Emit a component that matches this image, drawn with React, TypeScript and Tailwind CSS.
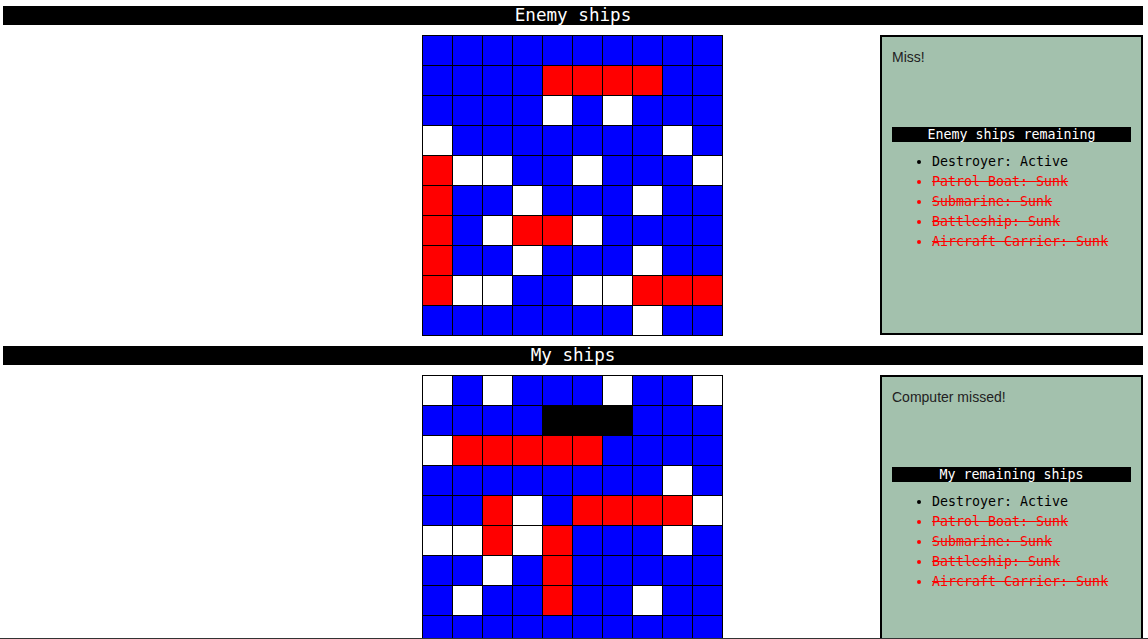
import React from "react";

const enemy = [
  "BBBBBBBBBB",
  "BBBBRRRRBB",
  "BBBBWBWBBB",
  "WBBBBBBBWB",
  "RWWBBWBBBW",
  "RBBWBBBWBB",
  "RBWRRWBBBB",
  "RBBWBBBWBB",
  "RWWBBWWRRR",
  "BBBBBBBWBB",
];

const mine = [
  "WBWBBBWBBW",
  "BBBBKKKBBB",
  "WRRRRRBBBB",
  "BBBBBBBBWB",
  "BBRWBRRRRW",
  "WWRWRBBBWB",
  "BBWBRBBBBB",
  "BWBBRBBWBB",
  "BBBBBBBBBB",
  "BBBBBBBBBB",
];

const cellClass: Record<string, string> = {
  B: "bg-[#0000ff]",
  R: "bg-[#ff0000]",
  W: "bg-white",
  K: "bg-black",
};

const ships = [
  { name: "Destroyer", sunk: false },
  { name: "Patrol Boat", sunk: true },
  { name: "Submarine", sunk: true },
  { name: "Battleship", sunk: true },
  { name: "Aircraft Carrier", sunk: true },
];

const mono = { fontFamily: '"DejaVu Sans Mono", monospace' };

function Board({ rows }: { rows: string[] }) {
  return (
    <div className="grid grid-cols-[repeat(10,29px)] grid-rows-[repeat(10,29px)] gap-px bg-black p-px w-[301px] h-[301px]">
      {rows.flatMap((r, i) =>
        r.split("").map((c, j) => <div key={i + "-" + j} className={cellClass[c]} />)
      )}
    </div>
  );
}

function Panel({ message, title }: { message: string; title: string }) {
  return (
    <div className="justify-self-end w-[263px] h-[300px] border-2 border-black bg-[#a3c1ad] px-[10px] pt-[12px]">
      <div
        className="h-[78px] text-[14px] leading-[16px] text-[#222]"
        style={{ fontFamily: '"Liberation Sans", Arial, sans-serif' }}
      >
        {message}
      </div>
      <div
        className="bg-black text-white text-center text-[13.3px] leading-[15px] h-[15px]"
        style={mono}
      >
        {title}
      </div>
      <ul className="mt-[10px] pl-[40px] list-disc text-[13.3px] leading-[20px]" style={mono}>
        {ships.map((s) => (
          <li
            key={s.name}
            className={s.sunk ? "text-[#ff0000] line-through" : "text-black"}
          >
            {s.name}: {s.sunk ? "Sunk" : "Active"}
          </li>
        ))}
      </ul>
    </div>
  );
}

function Header({ text }: { text: string }) {
  return (
    <div
      className="bg-black text-white text-center h-[19px] leading-[19px] text-[17.6px]"
      style={mono}
    >
      {text}
    </div>
  );
}

export default function App() {
  return (
    <div className="w-[1148px] h-[639px] overflow-hidden bg-white pl-[3px] pr-[5px] pt-[6px] relative">
      <Header text="Enemy ships" />
      <div className="mt-[10px] grid grid-cols-[419px_301px_1fr] items-start">
        <div />
        <Board rows={enemy} />
        <Panel message="Miss!" title="Enemy ships remaining" />
      </div>
      <div className="mt-[10px]">
        <Header text="My ships" />
      </div>
      <div className="mt-[10px] grid grid-cols-[419px_301px_1fr] items-start">
        <div />
        <Board rows={mine} />
        <Panel message="Computer missed!" title="My remaining ships" />
      </div>
      <div className="absolute left-0 right-0 bottom-0 h-px bg-[#333]" />
    </div>
  );
}
